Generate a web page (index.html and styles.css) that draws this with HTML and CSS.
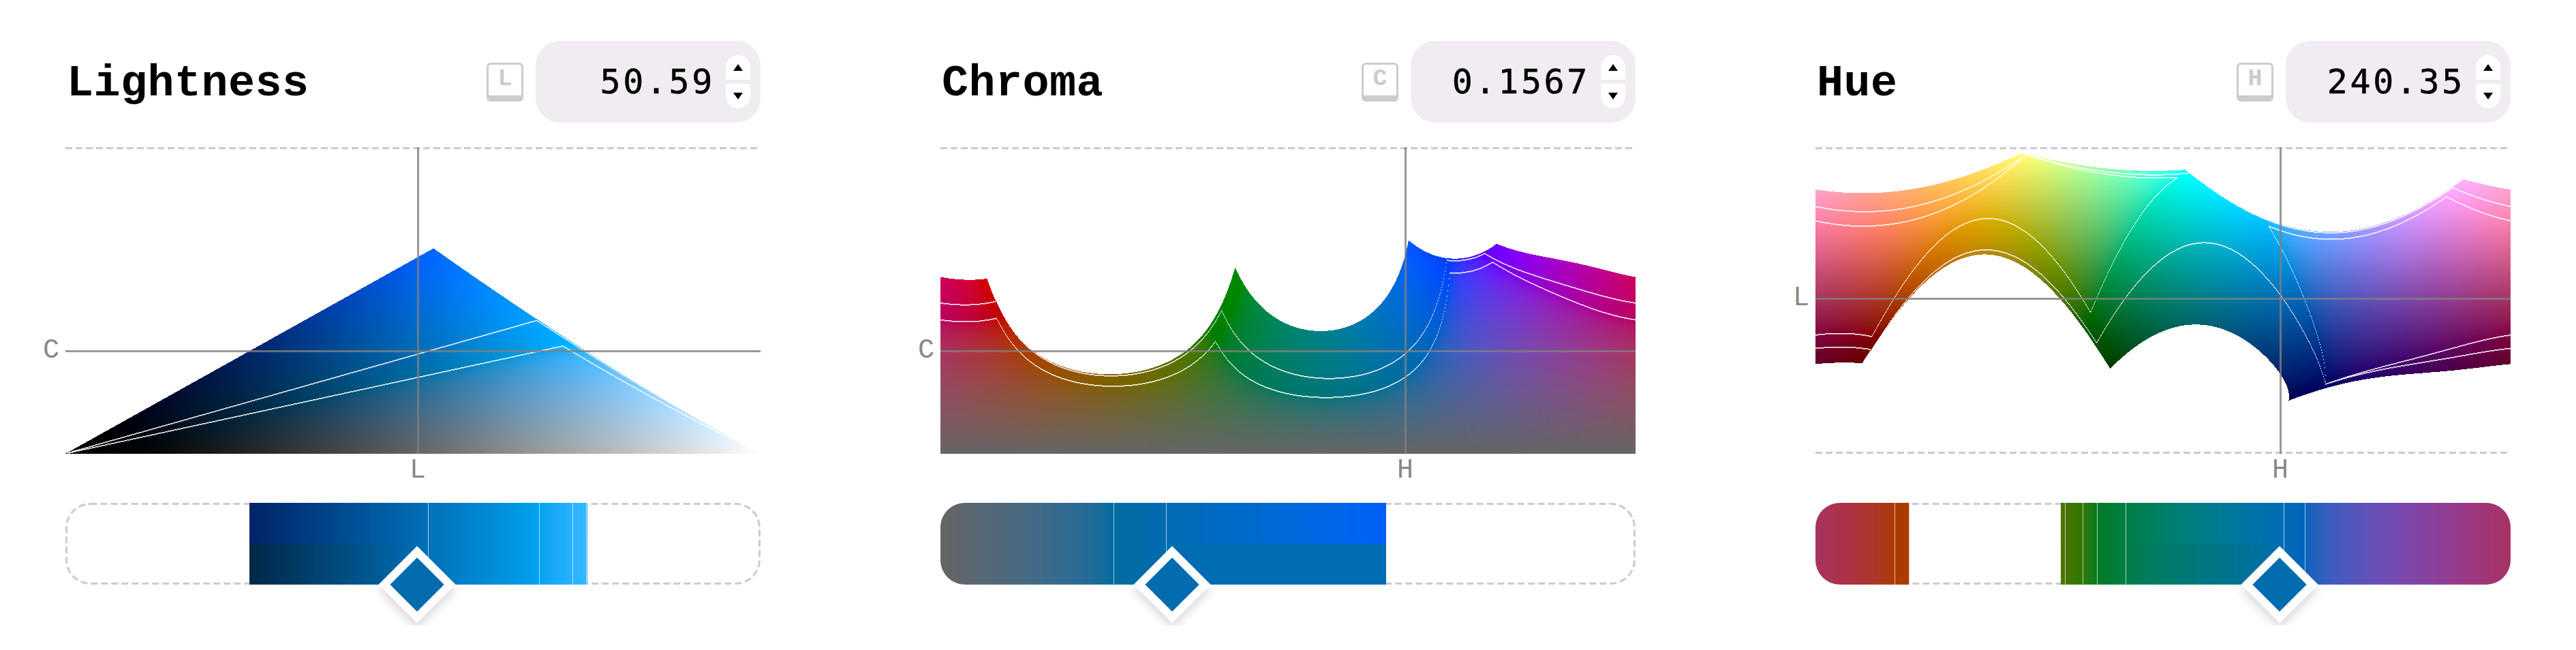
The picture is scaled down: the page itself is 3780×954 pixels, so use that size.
FILE: index.html
```html
<!DOCTYPE html>
<html lang="en">
<head>
    <meta charset="UTF-8">
    <title>OKLCH Color Picker</title>
    <link rel="stylesheet" href="styles.css">
</head>
<body>
    <div class="panels">
        <section class="panel">
            <div class="panel-head">
                <h2>Lightness</h2>
                <kbd class="key">L</kbd>
                <div class="field">
                    <span class="value">50.59</span>
                    <div class="spin"><span class="up"><i></i></span><span class="down"><i></i></span></div>
                </div>
            </div>
            <div class="chart">
                <canvas id="chartL" width="1020" height="450"></canvas>
                <div class="line-v" style="left: 50.59%"><span>L</span></div>
                <div class="line-h" style="bottom: 33.34%"><span>C</span></div>
            </div>
            <div class="slider">
                <svg class="track" width="1020" height="120"><rect x="1.5" y="1.5" width="1017" height="117" rx="35" /></svg>
                <canvas id="sliderL" width="1020" height="120"></canvas>
                <div class="thumb" style="left: 50.59%"></div>
            </div>
        </section>

        <section class="panel">
            <div class="panel-head">
                <h2>Chroma</h2>
                <kbd class="key">C</kbd>
                <div class="field">
                    <span class="value">0.1567</span>
                    <div class="spin"><span class="up"><i></i></span><span class="down"><i></i></span></div>
                </div>
            </div>
            <div class="chart">
                <canvas id="chartC" width="1020" height="450"></canvas>
                <div class="line-v" style="left: 66.76%"><span>H</span></div>
                <div class="line-h" style="bottom: 33.34%"><span>C</span></div>
            </div>
            <div class="slider">
                <svg class="track" width="1020" height="120"><rect x="1.5" y="1.5" width="1017" height="117" rx="35" /></svg>
                <canvas id="sliderC" width="1020" height="120"></canvas>
                <div class="thumb" style="left: 33.34%"></div>
            </div>
        </section>

        <section class="panel">
            <div class="panel-head">
                <h2>Hue</h2>
                <kbd class="key">H</kbd>
                <div class="field">
                    <span class="value">240.35</span>
                    <div class="spin"><span class="up"><i></i></span><span class="down"><i></i></span></div>
                </div>
            </div>
            <div class="chart">
                <canvas id="chartH" width="1020" height="450"></canvas>
                <div class="line-v" style="left: 66.76%"><span>H</span></div>
                <div class="line-h" style="bottom: 50.59%"><span>L</span></div>
            </div>
            <div class="slider">
                <svg class="track" width="1020" height="120"><rect x="1.5" y="1.5" width="1017" height="117" rx="35" /></svg>
                <canvas id="sliderH" width="1020" height="120"></canvas>
                <div class="thumb" style="left: 66.76%"></div>
            </div>
        </section>
    </div>

    <script src="charts.js"></script>
</body>
</html>
```

FILE: styles.css
```css
body {
    margin: 0;
    background-color: #fff;
    font-family: "DejaVu Sans Mono", monospace;
    color: #000;
}
.panels {
    display: grid;
    grid-template-columns: repeat(3, 1020px);
    gap: 264px;
    padding: 60px 96px;
}
.panel-head {
    display: flex;
    align-items: center;
    height: 120px;
}
.panel-head h2 {
    flex: 1;
    margin: 0;
    padding: 5px 0 0 2px;
    font-family: "Liberation Mono", monospace;
    font-size: 65px;
    font-weight: bold;
    letter-spacing: 0.5px;
}
.key {
    box-sizing: border-box;
    width: 54px;
    height: 57px;
    margin-right: 18px;
    border: 3px solid #ccc;
    border-bottom-width: 9px;
    border-radius: 6px;
    font-family: "Liberation Mono", monospace;
    font-size: 35px;
    font-weight: bold;
    line-height: 42px;
    text-align: center;
    color: #ccc;
}
.field {
    box-sizing: border-box;
    display: flex;
    align-items: center;
    justify-content: flex-end;
    gap: 16px;
    width: 330px;
    height: 120px;
    padding-right: 15px;
    border-radius: 36px;
    background-color: #f0ecf2;
}
.value {
    font-size: 50px;
    letter-spacing: 3.6px;
    -webkit-text-stroke: 0.5px #000;
}
.spin {
    display: flex;
    flex-direction: column;
    gap: 6px;
}
.spin span {
    display: flex;
    align-items: center;
    justify-content: center;
    width: 36px;
    height: 36px;
    background-color: #fff;
}
.spin .up {
    border-radius: 18px 18px 0 0;
}
.spin .down {
    border-radius: 0 0 18px 18px;
}
.spin i {
    width: 0;
    height: 0;
    border-left: 7px solid transparent;
    border-right: 7px solid transparent;
}
.spin .up i {
    border-bottom: 10px solid #000;
}
.spin .down i {
    border-top: 10px solid #000;
}

.chart {
    position: relative;
    height: 450px;
    margin-top: 36px;
    background-image: linear-gradient(to right, #cdc8d6 10px, transparent 10px), linear-gradient(to right, #cdc8d6 10px, transparent 10px);
    background-size: 15px 3px;
    background-position: 0 0, 0 100%;
    background-repeat: repeat-x;
}
.chart canvas {
    display: block;
}
.line-v,
.line-h {
    position: absolute;
    background-color: rgba(128, 128, 128, 0.8);
}
.line-v {
    top: 0;
    bottom: 0;
    width: 3px;
}
.line-h {
    left: 0;
    right: 0;
    height: 3px;
    margin-bottom: -1.5px;
}
.line-v span,
.line-h span {
    position: absolute;
    font-family: "Liberation Mono", monospace;
    font-size: 40px;
    line-height: 40px;
    color: #888;
}
.line-v span {
    top: calc(100% + 5px);
    left: -11px;
    width: 24px;
    text-align: center;
}
.line-h span {
    top: -19px;
    right: calc(100% + 9px);
}

.slider {
    position: relative;
    height: 120px;
    margin-top: 72px;
}
.track {
    position: absolute;
    top: 0;
    left: 0;
}
.track rect {
    fill: none;
    stroke: #cdc8d6;
    stroke-width: 3;
    stroke-dasharray: 10 5;
}
.slider canvas {
    position: relative;
    display: block;
    border-radius: 36px;
}
.thumb {
    position: absolute;
    top: 120px;
    box-sizing: border-box;
    width: 80px;
    height: 80px;
    margin: -40px 0 0 -40px;
    border: 12px solid #fff;
    background-color: #026cae;
    box-shadow: 6px 6px 12px rgba(0, 0, 0, 0.14);
    transform: rotate(45deg);
}
```

FILE: charts.js
```js
// current color
const L = 0.5059;
const C = 0.1567;
const H = 240.35;

const MAX_C = 0.47;

const SRGB = 0;
const P3 = 1;
const REC2020 = 2;
const OUT = 3;

function toLinearSrgb(l, c, h) {
    const rad = h * Math.PI / 180;
    const a = c * Math.cos(rad);
    const b = c * Math.sin(rad);
    const x = Math.pow(l + 0.3963377774 * a + 0.2158037573 * b, 3);
    const y = Math.pow(l - 0.1055613458 * a - 0.0638541728 * b, 3);
    const z = Math.pow(l - 0.0894841775 * a - 1.2914855480 * b, 3);
    return [
        4.0767416621 * x - 3.3077115913 * y + 0.2309699292 * z,
        -1.2684380046 * x + 2.6097574011 * y - 0.3413193965 * z,
        -0.0041960863 * x - 0.7034186147 * y + 1.7076147010 * z
    ];
}

function inRange(r, g, b) {
    const top = 1.0002;
    return r >= 0 && g >= 0 && b >= 0 && r <= top && g <= top && b <= top;
}

function gamutOf(rgb) {
    const r = rgb[0], g = rgb[1], b = rgb[2];
    if (inRange(r, g, b)) return SRGB;
    if (inRange(
        0.8224621 * r + 0.1775380 * g,
        0.0331941 * r + 0.9668058 * g,
        0.0170827 * r + 0.0723974 * g + 0.9105199 * b
    )) return P3;
    if (inRange(
        0.6274040 * r + 0.3292820 * g + 0.0433136 * b,
        0.0690970 * r + 0.9195400 * g + 0.0113612 * b,
        0.0163916 * r + 0.0880132 * g + 0.8955950 * b
    )) return REC2020;
    return OUT;
}

function encode(v) {
    if (v <= 0) return 0;
    if (v >= 1) return 255;
    const e = v <= 0.0031308 ? 12.92 * v : 1.055 * Math.pow(v, 1 / 2.4) - 0.055;
    return Math.round(e * 255);
}

function setPixel(data, i, rgb) {
    data[i] = encode(rgb[0]);
    data[i + 1] = encode(rgb[1]);
    data[i + 2] = encode(rgb[2]);
    data[i + 3] = 255;
}

function setWhite(data, i) {
    data[i] = data[i + 1] = data[i + 2] = data[i + 3] = 255;
}

function lighten(data, i, amount) {
    data[i] = Math.round(data[i] * (1 - amount) + 255 * amount);
    data[i + 1] = Math.round(data[i + 1] * (1 - amount) + 255 * amount);
    data[i + 2] = Math.round(data[i + 2] * (1 - amount) + 255 * amount);
}

// axis callback gets x and y in 0..1 (y from the bottom), returns [l, c, h]
function paintChart(id, axis) {
    const canvas = document.getElementById(id);
    const ctx = canvas.getContext('2d');
    const w = canvas.width;
    const h = canvas.height;
    const img = ctx.createImageData(w, h);
    for (let x = 0; x < w; x++) {
        let prev = OUT;
        for (let y = h - 1; y >= 0; y--) {
            const p = axis((x + 0.5) / w, (h - y - 0.5) / h);
            const rgb = toLinearSrgb(p[0], p[1], p[2]);
            const gamut = gamutOf(rgb);
            const i = (y * w + x) * 4;
            if (gamut !== OUT) {
                setPixel(img.data, i, rgb);
                // one pixel per column, so steep lines come out dotted
                if (prev !== OUT && prev !== gamut) {
                    setWhite(img.data, i);
                    lighten(img.data, i + w * 4, 0.5);
                }
            }
            prev = gamut;
        }
    }
    ctx.putImageData(img, 0, 0);
}

// top half shows all of rec2020, bottom half falls back to p3 by lowering chroma
function paintSlider(id, axis) {
    const canvas = document.getElementById(id);
    const ctx = canvas.getContext('2d');
    const w = canvas.width;
    const h = canvas.height;
    const img = ctx.createImageData(w, h);
    let prev = OUT;
    for (let x = 0; x < w; x++) {
        const p = axis((x - 0.5) / w);
        const rgb = toLinearSrgb(p[0], p[1], p[2]);
        const gamut = gamutOf(rgb);
        if (gamut !== OUT) {
            let low = rgb;
            if (gamut === REC2020) {
                let from = 0;
                let to = p[1];
                for (let n = 0; n < 14; n++) {
                    const mid = (from + to) / 2;
                    if (gamutOf(toLinearSrgb(p[0], mid, p[2])) <= P3) from = mid;
                    else to = mid;
                }
                low = toLinearSrgb(p[0], from, p[2]);
            }
            const edge = prev !== OUT && prev !== gamut;
            for (let y = 0; y < h; y++) {
                const i = (y * w + x) * 4;
                setPixel(img.data, i, y < h / 2 ? rgb : low);
                if (edge) lighten(img.data, i, 0.65);
            }
        }
        prev = gamut;
    }
    ctx.putImageData(img, 0, 0);
}

paintChart('chartL', (x, y) => [x, y * MAX_C, H]);
paintChart('chartC', (x, y) => [L, y * MAX_C, x * 360]);
paintChart('chartH', (x, y) => [y, C, x * 360]);

paintSlider('sliderL', x => [x, C, H]);
paintSlider('sliderC', x => [L, x * MAX_C, H]);
paintSlider('sliderH', x => [L, C, x * 360]);
```
